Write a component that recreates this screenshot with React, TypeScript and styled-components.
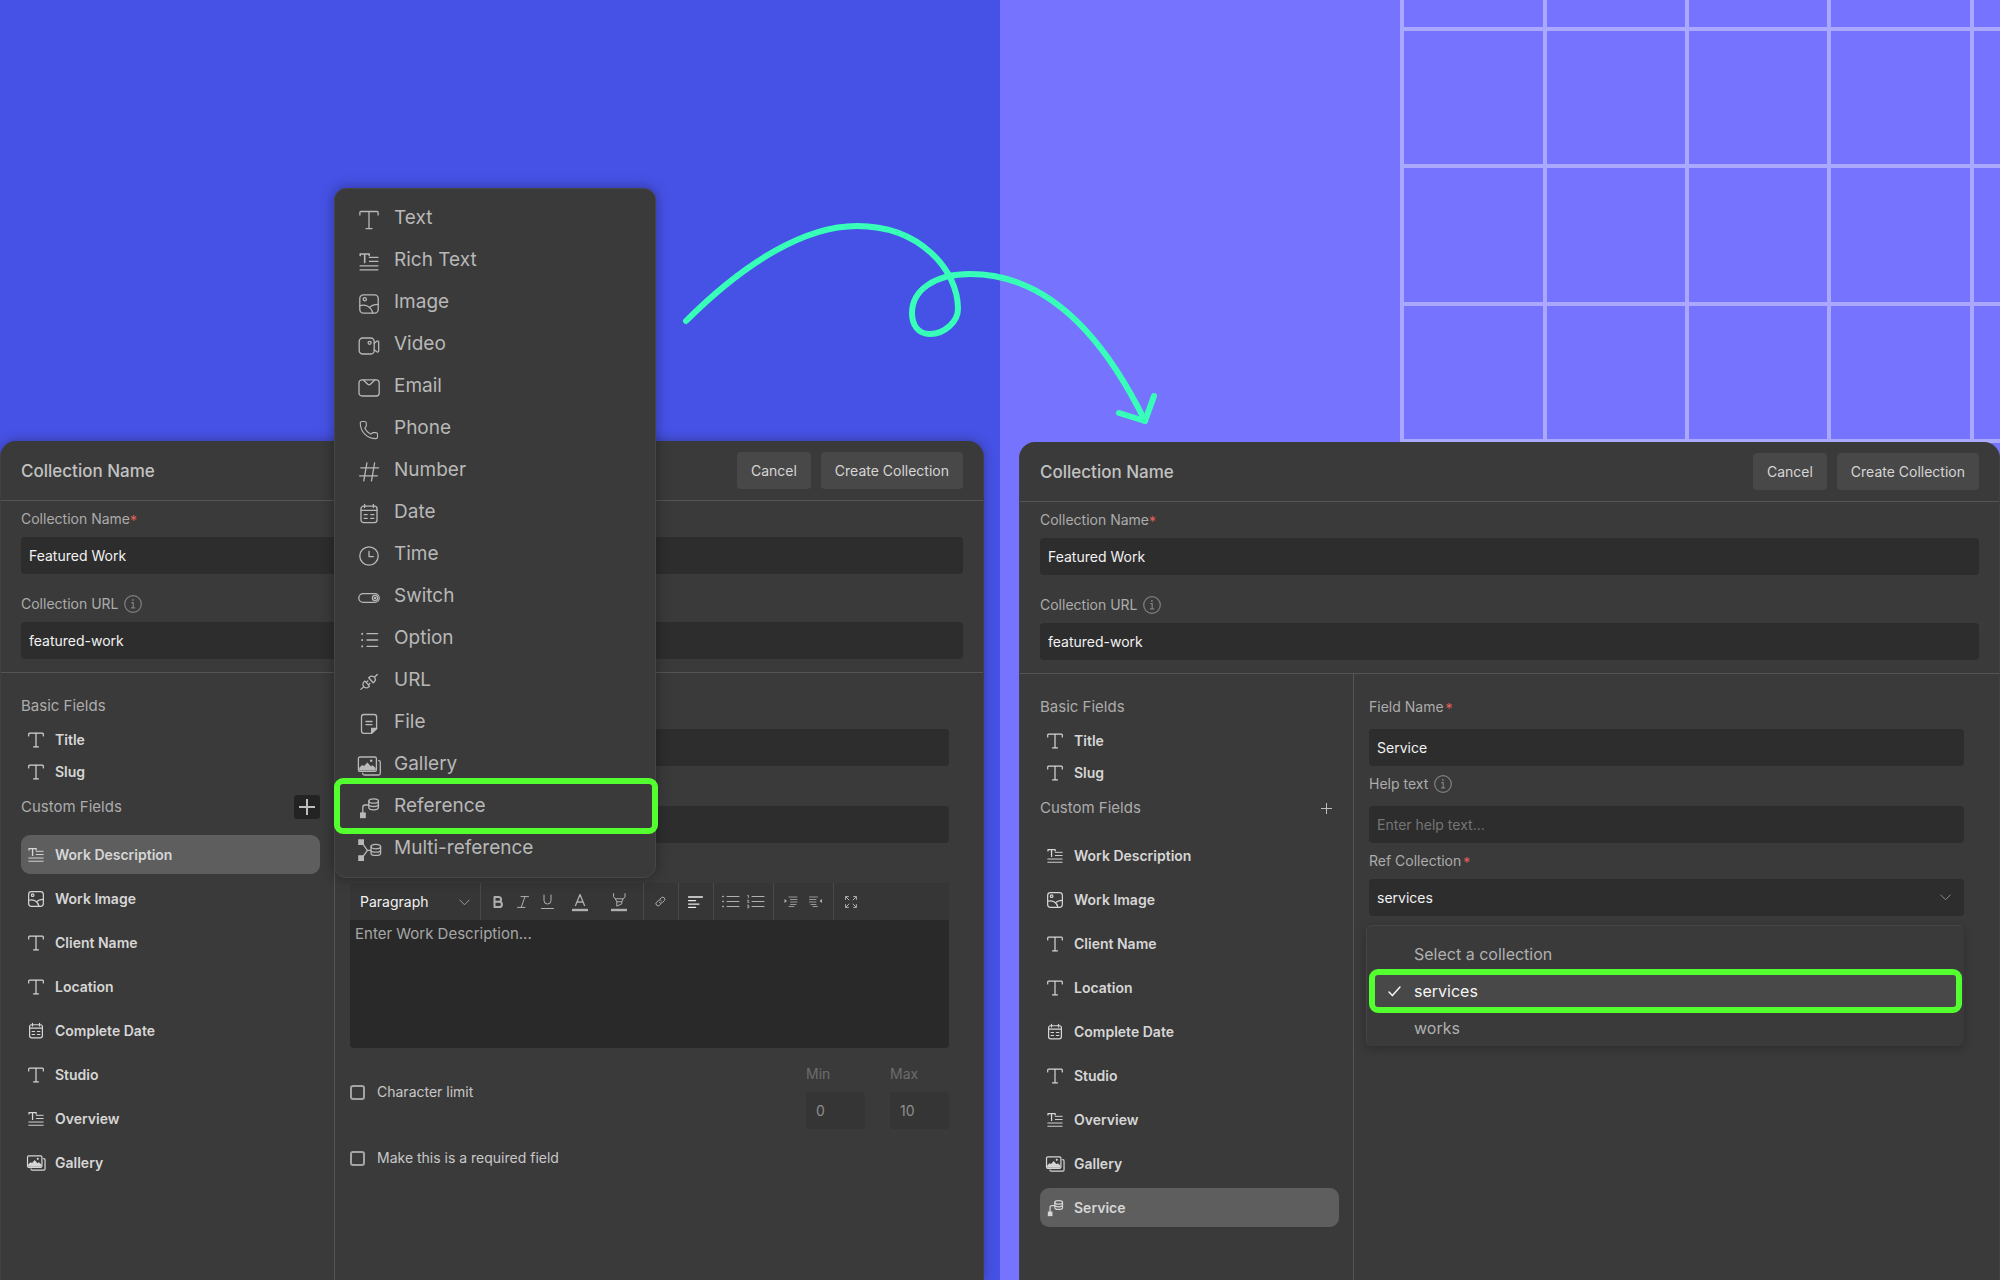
import React, { useId, useState } from "react";
import styled, { createGlobalStyle, css } from "styled-components";

const c = {
  blue: "#4652e6",
  violet: "#7673ff",
  gridLine: "#aaa8ff",
  mint: "#38ffb8",
  lime: "#54ff30",
  panel: "#3a3a3a",
  field: "#2d2d2d",
  line: "#555555",
  edge: "#464646",
  label: "#acacac",
  text: "#d6d6d6",
  bright: "#f2f2f2",
  danger: "#e5605c",
};

const GlobalStyle = createGlobalStyle`
  *, *::before, *::after { box-sizing: border-box; }
  html, body { margin: 0; background: ${c.violet}; }
  body, button, input, select, textarea {
    font-family: Inter, "Noto Sans", sans-serif;
    font-size: 14px;
    line-height: 20px;
  }
  button { border: 0; padding: 0; background: none; color: inherit; cursor: pointer; text-align: left; }
  svg { display: block; flex: none; overflow: visible; }
`;

/* ---------- page ---------- */

const Page = styled.main`
  position: relative;
  display: grid;
  grid-template-columns: 1fr 1fr;
  min-height: 100vh;
  overflow: hidden;
`;

const Half = styled.section<{ $side: "left" | "right" }>`
  position: relative;
  display: flex;
  flex-direction: column;
  ${(p) =>
    p.$side === "left"
      ? css`
          background: ${c.blue};
          padding: 441px 16px 0 0;
        `
      : css`
          background: ${c.violet};
          padding: 442px 0 0 19px;
        `}
`;

const Backdrop = styled.svg`
  position: absolute;
  top: 0;
  right: 0;
`;

const ArrowLayer = styled.svg`
  position: absolute;
  top: 200px;
  left: 660px;
  pointer-events: none;
`;

/* ---------- panel ---------- */

const Panel = styled.div<{ $shadow?: boolean }>`
  position: relative;
  flex: 1;
  display: flex;
  flex-direction: column;
  background: ${c.panel};
  border: 1px solid #404040;
  border-width: 0 1px;
  border-radius: 16px 16px 0 0;
  box-shadow: ${(p) => (p.$shadow ? "0 0 12px rgba(30, 30, 60, 0.45)" : "none")};
`;

const PanelHeader = styled.header`
  display: flex;
  align-items: center;
  justify-content: space-between;
  height: 60px;
  padding: 0 20px;
  border-bottom: 1px solid ${c.line};
`;

const PanelTitle = styled.h2`
  margin: 0;
  font-size: 17px;
  line-height: 24px;
  font-weight: 500;
  color: #c2c2c2;
`;

const Actions = styled.div`
  display: flex;
  gap: 10px;
`;

const ActionButton = styled.button`
  height: 37px;
  padding: 0 14px;
  border-radius: 4px;
  background: #484848;
  color: ${c.text};
`;

const Meta = styled.div`
  display: flex;
  flex-direction: column;
  gap: 20px;
  padding: 8px 20px 13px;
  border-bottom: 1px solid ${c.line};
`;

const Body = styled.div`
  flex: 1;
  display: grid;
  grid-template-columns: 334px 1fr;
`;

/* ---------- form parts ---------- */

const FieldBox = styled.div<{ $gap?: number }>`
  display: flex;
  flex-direction: column;
  gap: ${(p) => p.$gap ?? 8}px;
`;

const LabelRow = styled.div`
  display: flex;
  align-items: center;
  gap: 6px;
  height: 20px;
  color: ${c.label};
`;

const Star = styled.span<{ $spaced?: boolean }>`
  margin-left: ${(p) => (p.$spaced ? 2 : 0)}px;
  line-height: 1;
  vertical-align: -2px;
  color: ${c.danger};
`;

const control = css`
  width: 100%;
  height: 37px;
  padding: 0 8px;
  border: 0;
  border-radius: 4px;
  outline: 0;
  background: ${c.field};
  color: ${c.bright};
`;

const Input = styled.input`
  ${control}
  &::placeholder {
    color: #757575;
    opacity: 1;
  }
`;

const SelectWrap = styled.div`
  position: relative;
`;

const Select = styled.select`
  ${control}
  appearance: none;
`;

const SelectMark = styled.span`
  position: absolute;
  top: 15px;
  right: 13px;
  color: #8a8a8a;
  pointer-events: none;
`;

const OptionList = styled.ul`
  position: absolute;
  top: 46px;
  left: -3px;
  right: 0;
  margin: 0;
  padding: 13px 2px 3px;
  list-style: none;
  background: ${c.panel};
  border: 1px solid ${c.edge};
  border-width: 1px 0 0 1px;
  border-radius: 6px;
  box-shadow: 0 3px 10px rgba(0, 0, 0, 0.22);
`;

const OptionItem = styled.li<{ $active?: boolean }>`
  display: grid;
  grid-template-columns: 14px 1fr;
  align-items: center;
  gap: 12px;
  height: 30px;
  padding: 0 19px;
  font-size: 16px;
  line-height: 24px;
  color: #b0b0b0;
  ${(p) =>
    p.$active &&
    css`
      height: 44px;
      padding: 0 13px;
      border: 6px solid ${c.lime};
      border-radius: 9px;
      background: #484848;
      color: #f5f5f5;
    `}
`;

/* ---------- sidebar ---------- */

const Sidebar = styled.nav`
  padding: 23px 14px 0 20px;
  border-right: 1px solid ${c.line};
`;

const GroupTitle = styled.h3`
  margin: 0;
  font-size: 15px;
  line-height: 20px;
  font-weight: 400;
  color: ${c.label};
`;

const GroupHead = styled.div`
  display: flex;
  align-items: center;
  justify-content: space-between;
  height: 26px;
  margin: 6px 0 15px;
`;

const BasicList = styled.div`
  display: flex;
  flex-direction: column;
  padding-top: 8px;
`;

const CustomList = styled.div`
  display: flex;
  flex-direction: column;
  gap: 5px;
`;

const FieldButton = styled.button<{ $compact?: boolean; $active?: boolean }>`
  display: flex;
  align-items: center;
  gap: 11px;
  height: ${(p) => (p.$compact ? 32 : 39)}px;
  padding: 0 7px;
  border-radius: 9px;
  background: ${(p) => (p.$active ? "#5e5e5e" : "transparent")};
  color: ${c.text};
  font-weight: 600;
`;

const AddButton = styled.button<{ $open?: boolean }>`
  display: grid;
  place-items: center;
  width: 26px;
  height: 24px;
  border-radius: 3px;
  background: ${(p) => (p.$open ? "#232323" : "transparent")};
  color: #bdbdbd;
`;

/* ---------- field editor ---------- */

const Form = styled.div<{ $kind: "editor" | "reference" }>`
  display: flex;
  flex-direction: column;
  padding: ${(p) => (p.$kind === "editor" ? "56px 34px 0 15px" : "23px 35px 0 15px")};
`;

const CoveredInputs = styled.div`
  display: flex;
  flex-direction: column;
  gap: 40px;
  margin-bottom: 40px;
`;

const Stack = styled.div`
  display: flex;
  flex-direction: column;
  gap: 8px;
`;

const Toolbar = styled.div`
  display: flex;
  height: 37px;
  background: #363636;
`;

const ToolGroup = styled.div`
  position: relative;
  display: flex;
  align-items: center;
  padding: 0 5px 0 4px;
  color: #b0b0b0;
  &:not(:last-child) {
    border-right: 1px solid #494949;
  }
`;

const ToolButton = styled.button<{ $wide?: boolean }>`
  display: grid;
  place-items: center;
  width: ${(p) => (p.$wide ? 39 : 25)}px;
  height: 37px;
`;

const StyleSelect = styled.select`
  appearance: none;
  width: 121px;
  height: 37px;
  padding: 0 6px;
  border: 0;
  outline: 0;
  background: transparent;
  color: ${c.bright};
`;

const StyleMark = styled.span`
  position: absolute;
  top: 16px;
  right: 10px;
  color: #9a9a9a;
  pointer-events: none;
`;

const TextArea = styled.textarea`
  display: block;
  width: 100%;
  height: 128px;
  padding: 4px 5px;
  border: 0;
  border-radius: 0 0 4px 4px;
  outline: 0;
  resize: none;
  background: #292929;
  color: ${c.bright};
  font-size: 15px;
  &::placeholder {
    color: #a6a6a6;
    opacity: 1;
  }
`;

const Limits = styled.div`
  display: flex;
  justify-content: space-between;
  align-items: flex-start;
  margin: 16px 0 19px;
`;

const CheckLine = styled.label<{ $tall?: boolean }>`
  display: flex;
  align-items: center;
  gap: 12px;
  height: ${(p) => (p.$tall ? 56 : 20)}px;
  color: #c8c8c8;
`;

const CheckBox = styled.input`
  appearance: none;
  width: 15px;
  height: 15px;
  margin: 0;
  border: 2px solid #a4a4a4;
  border-radius: 3px;
`;

const Range = styled.div`
  display: flex;
  gap: 25px;
`;

const RangeField = styled.label`
  display: flex;
  flex-direction: column;
  gap: 8px;
  width: 59px;
  color: #6c6c6c;
`;

const RangeInput = styled.input`
  ${control}
  padding: 0 10px;
  background: #353535;
  color: #8e8e8e;
`;

/* ---------- field type menu ---------- */

const Menu = styled.div`
  position: absolute;
  top: 188px;
  left: 334px;
  width: 322px;
  padding: 8px 0;
  display: flex;
  flex-direction: column;
  background: ${c.panel};
  border: 1px solid ${c.edge};
  border-radius: 12px;
  box-shadow: 0 0 14px rgba(0, 0, 0, 0.35);
`;

const MenuItem = styled.button<{ $picked?: boolean }>`
  position: relative;
  display: flex;
  align-items: center;
  gap: 15px;
  height: 42px;
  padding: 0 24px;
  font-size: 19px;
  line-height: 24px;
  color: #b8b8b8;
  & > svg {
    margin-top: 3px;
  }
  ${(p) =>
    p.$picked &&
    css`
      &::after {
        content: "";
        position: absolute;
        inset: -7px -3px -7px -1px;
        border: 6px solid ${c.lime};
        border-radius: 9px;
      }
    `}
`;

/* ---------- icons ---------- */

type IconName =
  | "text" | "rich" | "image" | "video" | "email" | "phone" | "number" | "date"
  | "time" | "switch" | "option" | "url" | "file" | "gallery" | "reference" | "multi";

const shapes: Record<IconName, React.ReactNode> = {
  text: <path d="M.9 5V2.4a.9.9 0 0 1 .9-.9h16.4a.9.9 0 0 1 .9.9V5M10 1.5v17M7 18.6h6" />,
  rich: (
    <>
      <path d="M1.2 3.600V2h9v1.600M5.7 2v8.6" strokeWidth="1.6" />
      <path d="M10.4 5.4H19M10.4 9.4H19M1 13.8h18M1 17.8h18" strokeWidth="1.2" />
    </>
  ),
  image: (
    <>
      <rect x=".8" y=".8" width="18.4" height="18.4" rx="3.6" />
      <circle cx="5.8" cy="5.2" r="1.6" />
      <path d="M.8 11.6c5.5-1.6 11.4.8 13 7.6M19.2 10.4c-3.4 0-6.6 1-8.4 3" />
    </>
  ),
  video: (
    <>
      <rect x=".2" y="2" width="15" height="16" rx="3.6" />
      <circle cx="10.6" cy="6.8" r="1.5" />
      <path d="M15.2 7.2l2.6-2a1.2 1.2 0 0 1 1.9 1v8.6a1.2 1.2 0 0 1-1.9 1l-2.6-2" />
    </>
  ),
  email: (
    <>
      <rect x="0" y="1.8" width="20.2" height="16.2" rx="3" />
      <path d="M4.4 2l4.4 4.3a1.9 1.9 0 0 0 2.6 0L15.8 2" />
    </>
  ),
  phone: (
    <path
      transform="scale(.86) translate(-.5 -.3)"
      d="M13.832 16.568a1 1 0 0 0 1.213-.303l.355-.465A2 2 0 0 1 17 15h3a2 2 0 0 1 2 2v3a2 2 0 0 1-2 2A18 18 0 0 1 2 4a2 2 0 0 1 2-2h3a2 2 0 0 1 2 2v3a2 2 0 0 1-.8 1.6l-.468.351a1 1 0 0 0-.292 1.233 14 14 0 0 0 6.392 6.384"
    />
  ),
  number: <path d="M1.8 5.8h17.8M.6 13.8h17.8M7.9 1L4.8 18.8M15.6 1l-3.1 17.8" />,
  date: (
    <>
      <rect x="2" y="2.2" width="16" height="16.4" rx="2.6" />
      <path d="M5.6.4v3.2M14.4.4v3.2M2 6.4h16M5.2 10.6h3M11.8 10.6h3M5.2 14.4h3M11.8 14.4h3" />
    </>
  ),
  time: (
    <>
      <circle cx="10" cy="10" r="9.2" />
      <path d="M10 5.4v5.2h4.4" />
    </>
  ),
  switch: (
    <>
      <rect x="-.2" y="5.6" width="20.4" height="8.8" rx="4.4" />
      <circle cx="16" cy="10" r="2.6" />
      <circle cx="16" cy="10" r=".6" />
    </>
  ),
  option: (
    <>
      <path d="M8 3.7h10.6M8 10h10.6M8 16.3h10.6" />
      <path d="M3.2 3.6v.4M3.2 9.8v.4M3.2 16.1v.4" strokeWidth="1.8" />
    </>
  ),
  url: (
    <g transform="rotate(-42 10 10)">
      <path d="M-1 10h4M7.6 6.6v6.8H6.4a3.4 3.4 0 0 1 0-6.8zM7.6 8.4h2.2M7.6 11.6h2.2M12.6 6.6v6.8h1.2a3.4 3.4 0 0 0 0-6.8zM17.2 10h4" />
    </g>
  ),
  file: (
    <>
      <path d="M12.6 19.4H4.9a2.4 2.4 0 0 1-2.4-2.4V2.9A2.4 2.4 0 0 1 4.9.5h10.3a2.4 2.4 0 0 1 2.4 2.4v11.6zM7 7.5h6M7 10.6h6" />
      <path d="M12.6 19.4v-4.9h5z" fill="currentColor" />
    </>
  ),
  gallery: (
    <>
      <rect x="-.6" y="1" width="18" height="14.4" rx="1.6" />
      <path d="M.2 14.6v-2.8l3-2.8 1.8 1 3.4-3.6 3.4 3.8 1.8-1 3 2.8v2.6z" fill="currentColor" stroke="none" />
      <circle cx="12.2" cy="4.8" r="1.3" fill="currentColor" stroke="none" />
      <path d="M19.6 4.6h.2a1.5 1.5 0 0 1 1.5 1.5v11.4a1.5 1.5 0 0 1-1.5 1.5H5.2a1.5 1.5 0 0 1-1.5-1.5v-.3" />
    </>
  ),
  reference: (
    <>
      <ellipse cx="14.6" cy="3" rx="4.8" ry="2.2" />
      <path d="M9.8 3v6.6c0 1.2 2.1 2.2 4.8 2.2s4.8-1 4.8-2.2V3M9.8 6.3c0 1.2 2.1 2.2 4.8 2.2s4.8-1 4.8-2.2M9.8 7H6.2a2.4 2.4 0 0 0-2.4 2.4V15" />
      <rect x="1" y="14.4" width="5.8" height="5.8" fill="currentColor" stroke="none" />
    </>
  ),
  multi: (
    <>
      <ellipse cx="16.8" cy="6.6" rx="4.8" ry="2.2" />
      <path d="M12 6.6v6.6c0 1.2 2.1 2.2 4.8 2.2s4.8-1 4.8-2.2V6.6M12 9.9c0 1.2 2.1 2.2 4.8 2.2s4.8-1 4.8-2.2M12 10.4H8.4M3.6 3.6l4.8 6.8-4.8 6.8" />
      <path d="M-.8-.8h5.8v5.8H-.8zM-.8 15.2h5.8V21H-.8z" fill="currentColor" stroke="none" />
    </>
  ),
};

const Icon = ({ name, size = 16 }: { name: IconName; size?: number }) => (
  <svg
    width={size}
    height={size}
    viewBox="0 0 20 20"
    fill="none"
    stroke="currentColor"
    strokeWidth={size > 16 ? 1.3 : 1.5}
    strokeLinecap="round"
    strokeLinejoin="round"
    aria-hidden
  >
    {shapes[name]}
  </svg>
);

const Glyph = ({ w, h, sw = 1, children }: { w: number; h: number; sw?: number; children: React.ReactNode }) => (
  <svg
    width={w}
    height={h}
    viewBox={`0 0 ${w} ${h}`}
    fill="none"
    stroke="currentColor"
    strokeWidth={sw}
    strokeLinecap="round"
    strokeLinejoin="round"
    aria-hidden
  >
    {children}
  </svg>
);

const InfoIcon = styled(({ className }: { className?: string }) => (
  <svg className={className} width="18" height="18" viewBox="0 0 18 18" fill="none" stroke="currentColor" aria-hidden>
    <circle cx="9" cy="9" r="8.3" strokeWidth="1.2" />
    <path d="M7.3 7.6h1.9v5M7 12.8h4.2" strokeWidth="1.2" />
    <circle cx="8.9" cy="5" r=".9" fill="currentColor" stroke="none" />
  </svg>
))`
  color: #808080;
`;

const Chevron = () => (
  <Glyph w={11} h={7}>
    <path d="M.8 1l4.7 4.8L10.2 1" />
  </Glyph>
);

const Plus = ({ size }: { size: number }) => (
  <Glyph w={size} h={size} sw={size > 12 ? 2 : 1}>
    <path d={`M${size / 2} 0v${size}M0 ${size / 2}h${size}`} strokeLinecap="butt" />
  </Glyph>
);

/* ---------- data ---------- */

type FieldDef = { icon: IconName; name: string };

const basicFields: FieldDef[] = [
  { icon: "text", name: "Title" },
  { icon: "text", name: "Slug" },
];

const customFields: FieldDef[] = [
  { icon: "rich", name: "Work Description" },
  { icon: "image", name: "Work Image" },
  { icon: "text", name: "Client Name" },
  { icon: "text", name: "Location" },
  { icon: "date", name: "Complete Date" },
  { icon: "text", name: "Studio" },
  { icon: "rich", name: "Overview" },
  { icon: "gallery", name: "Gallery" },
];

const fieldTypes: FieldDef[] = [
  { icon: "text", name: "Text" },
  { icon: "rich", name: "Rich Text" },
  { icon: "image", name: "Image" },
  { icon: "video", name: "Video" },
  { icon: "email", name: "Email" },
  { icon: "phone", name: "Phone" },
  { icon: "number", name: "Number" },
  { icon: "date", name: "Date" },
  { icon: "time", name: "Time" },
  { icon: "switch", name: "Switch" },
  { icon: "option", name: "Option" },
  { icon: "url", name: "URL" },
  { icon: "file", name: "File" },
  { icon: "gallery", name: "Gallery" },
  { icon: "reference", name: "Reference" },
  { icon: "multi", name: "Multi-reference" },
];

/* ---------- components ---------- */

type FieldProps = {
  label: string;
  value?: string;
  placeholder?: string;
  required?: boolean;
  spaced?: boolean;
  info?: boolean;
  gap?: number;
};

const Field = ({ label, value, placeholder, required, spaced, info, gap }: FieldProps) => {
  const id = useId();
  return (
    <FieldBox $gap={gap}>
      <LabelRow>
        <label htmlFor={id}>
          {label}
          {required && <Star $spaced={spaced}>*</Star>}
        </label>
        {info && <InfoIcon />}
      </LabelRow>
      <Input id={id} defaultValue={value} placeholder={placeholder} />
    </FieldBox>
  );
};

type PanelProps = {
  fields: FieldDef[];
  initial: string;
  adding?: boolean;
  children: React.ReactNode;
};

const CollectionPanel = ({ fields, initial, adding, children }: PanelProps) => {
  const [active, setActive] = useState(initial);
  return (
    <Panel $shadow={adding}>
      <PanelHeader>
        <PanelTitle>Collection Name</PanelTitle>
        <Actions>
          <ActionButton>Cancel</ActionButton>
          <ActionButton>Create Collection</ActionButton>
        </Actions>
      </PanelHeader>
      <Meta>
        <Field label="Collection Name" value="Featured Work" required />
        <Field label="Collection URL" value="featured-work" info />
      </Meta>
      <Body>
        <Sidebar>
          <GroupTitle>Basic Fields</GroupTitle>
          <BasicList>
            {basicFields.map((f) => (
              <FieldButton key={f.name} $compact>
                <Icon name={f.icon} />
                {f.name}
              </FieldButton>
            ))}
          </BasicList>
          <GroupHead>
            <GroupTitle>Custom Fields</GroupTitle>
            <AddButton $open={adding} aria-label="Add field">
              <Plus size={adding ? 16 : 11} />
            </AddButton>
          </GroupHead>
          <CustomList>
            {fields.map((f) => (
              <FieldButton key={f.name} $active={f.name === active} onClick={() => setActive(f.name)}>
                <Icon name={f.icon} />
                {f.name}
              </FieldButton>
            ))}
          </CustomList>
        </Sidebar>
        {children}
      </Body>
    </Panel>
  );
};

const EditorToolbar = () => (
  <Toolbar role="toolbar" aria-label="Formatting">
    <ToolGroup>
      <StyleSelect aria-label="Text style" defaultValue="Paragraph">
        <option>Paragraph</option>
      </StyleSelect>
      <StyleMark>
        <Chevron />
      </StyleMark>
    </ToolGroup>
    <ToolGroup>
      <ToolButton aria-label="Bold">
        <Glyph w={12} h={14} sw={2}>
          <path d="M2.5 2h4.2a2.4 2.4 0 0 1 0 4.8H2.5zM2.5 6.8h4.8a2.6 2.6 0 0 1 0 5.2H2.5z" />
        </Glyph>
      </ToolButton>
      <ToolButton aria-label="Italic">
        <Glyph w={12} h={12}>
          <path d="M4 .6h7.5M.5 11.4H8M8 .6L4.2 11.4" />
        </Glyph>
      </ToolButton>
      <ToolButton aria-label="Underline">
        <Glyph w={13} h={16}>
          <path d="M3 1v5.5a3.5 3.5 0 0 0 7 0V1M.5 14.5h12" />
        </Glyph>
      </ToolButton>
      <ToolButton $wide aria-label="Text colour">
        <Glyph w={18} h={18}>
          <path d="M4.5 12.5L9 1.5l4.5 11M6 9h6" strokeWidth="1.3" />
          <path d="M1 17h16" strokeWidth="2.4" strokeLinecap="butt" />
        </Glyph>
      </ToolButton>
      <ToolButton $wide aria-label="Highlight">
        <Glyph w={18} h={18}>
          <path d="M3.6.6v3.2l1.600 2h8.2l1.600-2V.6M5.4 5.8l1.4 3v4.400l5-2.400V8.8l1.4-3M6.8 8.8h5" />
          <path d="M1 17h16" strokeWidth="2.4" strokeLinecap="butt" />
        </Glyph>
      </ToolButton>
    </ToolGroup>
    <ToolGroup>
      <ToolButton aria-label="Link">
        <Glyph w={11} h={11}>
          <path d="M4.4 6.4a2 2 0 0 0 3 .2l1.8-1.8a2.1 2.1 0 0 0-3-3L5.2 2.8M6.4 4.6a2 2 0 0 0-3-.2L1.6 6.2a2.1 2.1 0 0 0 3 3l1-1" />
        </Glyph>
      </ToolButton>
    </ToolGroup>
    <ToolGroup>
      <ToolButton aria-label="Align left">
        <Glyph w={15} h={12} sw={1.3}>
          <g stroke="#ececec">
            <path d="M.6 1h13.8M.6 4.6h7M.6 8.1h10.4M.6 11.3h7" />
          </g>
        </Glyph>
      </ToolButton>
    </ToolGroup>
    <ToolGroup>
      <ToolButton aria-label="Bulleted list">
        <Glyph w={17} h={13}>
          <path d="M5 1.5h12M5 6.5h12M5 11.5h12" />
          <path d="M.8 1.5h.4M.8 6.5h.4M.8 11.5h.4" strokeWidth="1.6" />
        </Glyph>
      </ToolButton>
      <ToolButton aria-label="Numbered list">
        <Glyph w={17} h={13}>
          <path d="M5 1.5h12M5 6.5h12M5 11.5h12" />
          <path d="M.6.6l.8-.4v2.6M.4 5.4h1.4L.6 7.4h1.4M.4 10.2h1.4v1.2H.8h1v1.4H.4" strokeWidth=".8" />
        </Glyph>
      </ToolButton>
    </ToolGroup>
    <ToolGroup>
      <ToolButton aria-label="Indent">
        <Glyph w={13} h={11}>
          <path d="M5 1h8M6.500 3.5H13M6.5 6H13M6.5 8.5H12M5 10.5h5" strokeWidth=".8" />
          <path d="M.5 3v4L3 5z" fill="currentColor" stroke="none" />
        </Glyph>
      </ToolButton>
      <ToolButton aria-label="Outdent">
        <Glyph w={13} h={11}>
          <path d="M.5 1h8M.5 3.5H7M.5 6H7M2 8.5h5M4 10.5h4.5" strokeWidth=".8" />
          <path d="M13 3v4l-2.500-2z" fill="currentColor" stroke="none" />
        </Glyph>
      </ToolButton>
    </ToolGroup>
    <ToolGroup>
      <ToolButton aria-label="Full screen">
        <Glyph w={12} h={12}>
          <path d="M.6 3.4V.6h2.8M.8.8l3.200 3.200M8.6.6h2.8v2.8M11.2.8L8 4M.6 8.6v2.8h2.8M.8 11.2L4 8M11.4 8.6v2.8H8.6M11.2 11.2L8 8" />
        </Glyph>
      </ToolButton>
    </ToolGroup>
  </Toolbar>
);

const RichTextForm = () => (
  <Form $kind="editor">
    <CoveredInputs>
      <Input aria-label="Field name" />
      <Input aria-label="Help" />
    </CoveredInputs>
    <EditorToolbar />
    <TextArea aria-label="Default value" placeholder="Enter Work Description..." />
    <Limits>
      <CheckLine $tall>
        <CheckBox type="checkbox" />
        Character limit
      </CheckLine>
      <Range>
        <RangeField>
          Min
          <RangeInput defaultValue="0" />
        </RangeField>
        <RangeField>
          Max
          <RangeInput defaultValue="10" />
        </RangeField>
      </Range>
    </Limits>
    <CheckLine>
      <CheckBox type="checkbox" />
      Make this is a required field
    </CheckLine>
  </Form>
);

const ReferenceForm = () => {
  const id = useId();
  const [value, setValue] = useState("services");
  return (
    <Form $kind="reference">
      <Stack>
        <Field label="Field Name" value="Service" required spaced gap={12} />
        <Field label="Help text" placeholder="Enter help text..." info gap={12} />
        <FieldBox>
          <LabelRow>
            <label htmlFor={id}>
              Ref Collection<Star $spaced>*</Star>
            </label>
          </LabelRow>
          <SelectWrap>
            <Select id={id} value={value} onChange={(e) => setValue(e.target.value)}>
              <option>services</option>
              <option>works</option>
            </Select>
            <SelectMark>
              <Chevron />
            </SelectMark>
            <OptionList role="listbox" aria-label="Collections">
              {["Select a collection", "services", "works"].map((name) => (
                <OptionItem
                  key={name}
                  role="option"
                  aria-selected={name === value}
                  $active={name === value}
                  onClick={() => setValue(name)}
                >
                  <span>
                    {name === value && (
                      <Glyph w={13} h={11} sw={1.5}>
                        <path d="M1 6l3.4 3.6L12 1" />
                      </Glyph>
                    )}
                  </span>
                  {name}
                </OptionItem>
              ))}
            </OptionList>
          </SelectWrap>
        </FieldBox>
      </Stack>
    </Form>
  );
};

const GridBackdrop = () => (
  <Backdrop width="600" height="443" viewBox="0 0 600 443" stroke={c.gridLine} strokeWidth="4" aria-hidden>
    {[2, 145, 287, 429, 572].map((x) => (
      <path key={x} d={`M${x} 0v443`} />
    ))}
    {[29, 166, 304, 441].map((y) => (
      <path key={y} d={`M0 ${y}h600`} />
    ))}
  </Backdrop>
);

const LoopArrow = () => (
  <ArrowLayer
    width="520"
    height="240"
    viewBox="660 200 520 240"
    fill="none"
    stroke={c.mint}
    strokeWidth="6"
    strokeLinecap="round"
    strokeLinejoin="round"
    aria-hidden
  >
    <path d="M686 321C745 262 805 226 857 226C920 226 958 270 958 309C958 321 945 334 930 334C918 334 912 325 912 313C912 290 935 274 970 274C1040 274 1098 325 1145 421" />
    <path d="M1119 413l26 8 9-25" />
  </ArrowLayer>
);

export default function App() {
  return (
    <>
      <GlobalStyle />
      <Page>
        <Half $side="left">
          <CollectionPanel fields={customFields} initial="Work Description" adding>
            <RichTextForm />
          </CollectionPanel>
          <Menu role="menu" aria-label="Field types">
            {fieldTypes.map((t) => (
              <MenuItem key={t.name} role="menuitem" $picked={t.name === "Reference"}>
                <Icon name={t.icon} size={20} />
                {t.name}
              </MenuItem>
            ))}
          </Menu>
        </Half>
        <Half $side="right">
          <GridBackdrop />
          <CollectionPanel fields={[...customFields, { icon: "reference", name: "Service" }]} initial="Service">
            <ReferenceForm />
          </CollectionPanel>
        </Half>
        <LoopArrow />
      </Page>
    </>
  );
}
